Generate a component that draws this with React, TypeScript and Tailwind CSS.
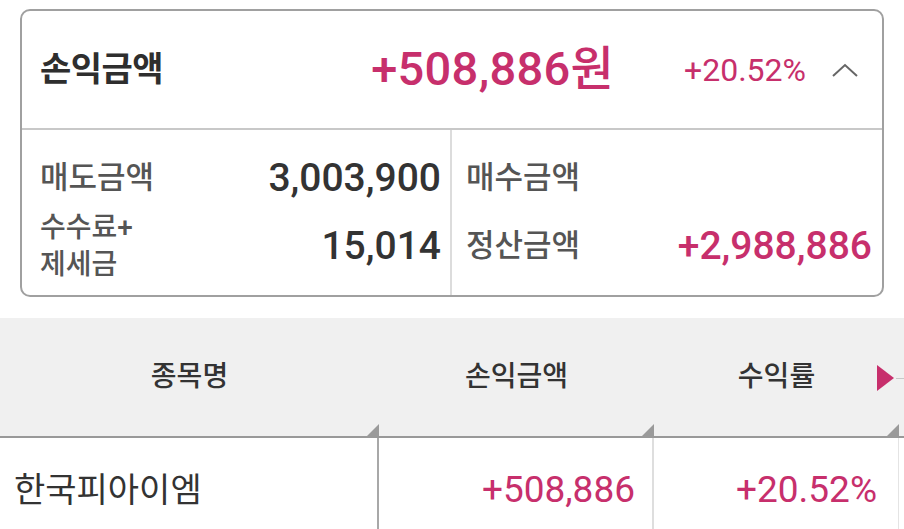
const PINK = "text-[#c72f6c]";

function Corner() {
  return (
    <svg
      className="absolute right-0 bottom-0"
      width="12"
      height="12"
      viewBox="0 0 12 12"
    >
      <polygon points="12,0 12,12 0,12" fill="#9a9a9a" />
    </svg>
  );
}

export default function App() {
  return (
    <div
      className="w-[904px] h-[529px] overflow-hidden bg-white text-[#333]"
      style={{ fontFamily: "Roboto, 'Noto Sans CJK KR', sans-serif" }}
    >
      {/* Summary card */}
      <div className="mt-[9px] mx-[20px] border-2 border-[#a0a0a0] rounded-[10px] overflow-hidden">
        <div className="h-[119px] flex items-center pl-[18px] border-b-2 border-[#c8c8c8]">
          <span className="text-[34px] font-bold tracking-[-0.5px] text-[#2e2e2e]">
            손익금액
          </span>
          <span className={`ml-auto text-[47px] font-medium tracking-[0.3px] ${PINK}`}>
            +508,886원
          </span>
          <span className={`ml-[70px] text-[32px] ${PINK}`}>+20.52%</span>
          <svg
            className="ml-[26px] mr-[24px]"
            width="26"
            height="14"
            viewBox="0 0 26 14"
          >
            <polyline
              points="1,13 13,2 25,13"
              fill="none"
              stroke="#666"
              strokeWidth="2"
            />
          </svg>
        </div>
        <div className="grid grid-cols-[430px_1fr]">
          <div className="pl-[18px] pr-[9px] pt-[14px] pb-[15px] border-r-2 border-[#dcdcdc]">
            <div className="h-[68px] flex items-center justify-between">
              <span className="text-[31px] font-medium text-[#555]">매도금액</span>
              <span className="text-[39px] font-medium text-[#333]">3,003,900</span>
            </div>
            <div className="h-[68px] flex items-center justify-between">
              <span className="text-[28px] font-medium leading-[37px] text-[#555]">
                수수료+
                <br />
                제세금
              </span>
              <span className="text-[39px] font-medium text-[#333]">15,014</span>
            </div>
          </div>
          <div className="pl-[14px] pr-[10px] pt-[14px] pb-[15px]">
            <div className="h-[68px] flex items-center justify-between">
              <span className="text-[31px] font-medium text-[#555]">매수금액</span>
            </div>
            <div className="h-[68px] flex items-center justify-between">
              <span className="text-[31px] font-medium text-[#555]">정산금액</span>
              <span className={`text-[39px] font-medium ${PINK}`}>+2,988,886</span>
            </div>
          </div>
        </div>
      </div>

      {/* Table */}
      <div className="mt-[21px]">
        <div className="h-[120px] bg-[#f0f0f0] border-b-2 border-[#999] grid grid-cols-[379px_275px_245px_1fr] text-[28px] font-medium text-[#333]">
          <div className="relative flex items-center justify-center">
            종목명
            <Corner />
          </div>
          <div className="relative flex items-center justify-center">
            손익금액
            <Corner />
          </div>
          <div className="relative flex items-center justify-center">
            수익률
            <Corner />
            {/* scroll indicator */}
            <div className="absolute right-[-6px] top-[47px] flex items-center">
              <svg width="17" height="26" viewBox="0 0 17 26">
                <polygon points="0,0 17,13 0,26" fill="#c72f6c" />
              </svg>
              <div className="w-[9px] h-px bg-[#c8c8c8] ml-[2px]" />
            </div>
          </div>
          <div />
        </div>
        <div className="h-[100px] grid grid-cols-[379px_275px_245px_1fr]">
          <div className="flex items-center pl-[14px] pt-[4px] text-[34px] text-[#333] border-r-2 border-[#a8a8a8]">
            한국피아이엠
          </div>
          <div
            className={`flex items-center justify-end pr-[17px] pt-[4px] text-[37px] border-r-2 border-[#dedede] ${PINK}`}
          >
            +508,886
          </div>
          <div
            className={`flex items-center justify-end pr-[21px] pt-[4px] text-[37px] border-r border-[#e4e4e4] ${PINK}`}
          >
            +20.52%
          </div>
          <div />
        </div>
      </div>
    </div>
  );
}
